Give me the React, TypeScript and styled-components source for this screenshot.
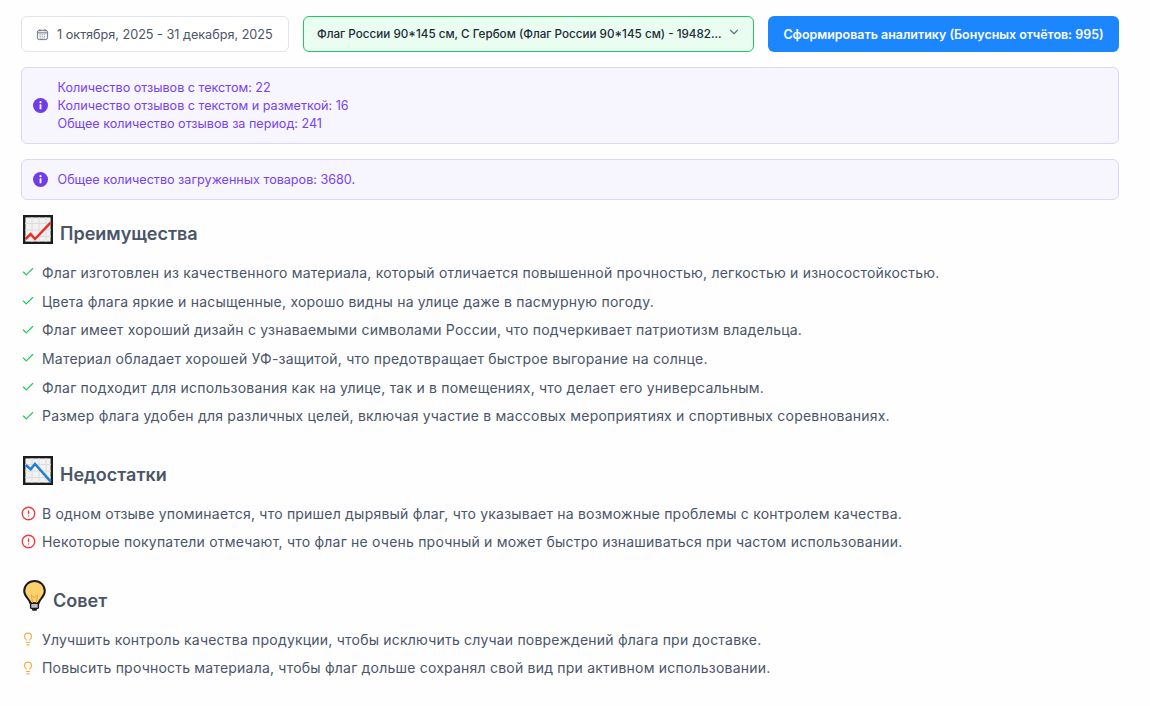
import React from "react";
import styled, { createGlobalStyle } from "styled-components";
import { ChevronDown, Check, CircleAlert, Lightbulb } from "lucide-react";

const GlobalStyle = createGlobalStyle`
	html, body {
		margin: 0;
		padding: 0;
		background: #fefefe;
		font-family: Inter, "Noto Sans", sans-serif;
	}
`;

const Page = styled.div`
	width: 1098px;
	padding: 16px 0 0 21px;
`;

const Toolbar = styled.div`
	display: flex;
	gap: 14px;
	height: 36px;
	margin-bottom: 15px;
`;

const DateBox = styled.div`
	box-sizing: border-box;
	width: 268px;
	display: flex;
	align-items: center;
	gap: 8px;
	padding-left: 14px;
	background: #fff;
	border: 1px solid #e0e3eb;
	border-radius: 6px;
	font-size: 12.65px;
	color: #4b5563;
	white-space: nowrap;
`;

const ProductSelect = styled.div`
	box-sizing: border-box;
	width: 451px;
	display: flex;
	justify-content: space-between;
	align-items: center;
	padding: 0 12px 0 13px;
	background: #e9fdf1;
	border: 1px solid #22c55e;
	border-radius: 6px;
	font-size: 11.67px;
	font-weight: 500;
	color: #1f2937;
	white-space: nowrap;
	svg {
		margin-top: -4px;
		color: #6b7280;
	}
`;

const SubmitButton = styled.button`
	width: 351px;
	padding: 0;
	border: none;
	border-radius: 6px;
	background: #1c86ff;
	color: #fff;
	font-family: inherit;
	font-size: 12.45px;
	font-weight: 600;
	white-space: nowrap;
`;

const Notice = styled.div`
	box-sizing: border-box;
	display: flex;
	align-items: center;
	gap: 9.5px;
	padding: 10.5px 11px;
	margin-bottom: 15px;
	background: #f7f5fe;
	border: 1px solid #e0d5f9;
	border-radius: 6px;
	color: #7544ee;
	font-size: 12.6px;
	line-height: 18px;
`;

const SectionTitle = styled.div`
	display: flex;
	align-items: flex-end;
	gap: 7px;
	height: 32px;
	margin-bottom: 11px;
	padding-left: 2px;
	color: #4a5568;
	font-size: 18px;
	font-weight: 600;
	line-height: 26px;
	svg {
		margin-bottom: 3px;
	}
`;

const Section = styled.section`
	margin-bottom: 25.6px;
`;

const List = styled.ul`
	list-style: none;
	margin: 0;
	padding: 0;
`;

const Item = styled.li`
	display: flex;
	align-items: center;
	gap: 7px;
	height: 28.7px;
	color: #4a5568;
	font-size: 14px;
	letter-spacing: 0.21px;
	white-space: nowrap;
`;

const Marker = styled.span`
	width: 14px;
	display: flex;
	justify-content: center;
	svg {
		flex-shrink: 0;
	}
`;

const CalendarIcon = () => (
	<svg width="13" height="13" viewBox="0 0 14 14" fill="none">
		<rect x="1.5" y="2.5" width="11" height="10" rx="2" fill="#eef0f3" stroke="#6b7280" strokeWidth="1" />
		<path d="M1.5 5.2h11M4.3 1.2v2.4M9.7 1.2v2.4" stroke="#6b7280" strokeWidth="1" />
		<path d="M4 7.3h6M4 9.2h6M4 11h6" stroke="#9ca3af" strokeWidth="0.9" strokeDasharray="1.2 1" />
	</svg>
);

const InfoIcon = () => (
	<svg width="15" height="15" viewBox="0 0 15 15" style={{ flexShrink: 0 }}>
		<circle cx="7.5" cy="7.5" r="7.5" fill="#6f3ce8" />
		<rect x="6.6" y="6.3" width="1.8" height="5" rx="0.4" fill="#fff" />
		<circle cx="7.5" cy="4.2" r="1.1" fill="#fff" />
	</svg>
);

const ChartIcon = ({ line, points }: { line: string; points: string }) => (
	<svg width="30" height="29" viewBox="0 0 30 29">
		<rect x="1.2" y="1.2" width="27.6" height="26.6" fill="#f1f1f1" stroke="#1c1c1c" strokeWidth="2.4" />
		<path d="M2 8.5h26M2 15h26M2 21.5h26M9 2v25M16 2v25M23 2v25" stroke="#dcdcdc" strokeWidth="1" />
		<polyline points={points} fill="none" stroke={line} strokeWidth="2.5" />
	</svg>
);

const BulbIcon = () => (
	<svg width="23" height="31" viewBox="0 0 23 31">
		<path
			d="M11.5 1C5.8 1 1.2 5.4 1.2 11c0 3.4 1.8 5.6 3.6 7.6 1.4 1.6 2.2 2.9 2.6 4.6h8.2c.4-1.7 1.2-3 2.6-4.6 1.8-2 3.6-4.2 3.6-7.6C21.8 5.4 17.2 1 11.5 1z"
			fill="#fdd26e"
			stroke="#1c1c1c"
			strokeWidth="2"
		/>
		<path d="M9.6 23 8.4 15l3.1 2.6L14.6 15l-1.2 8" fill="none" stroke="#e8a53a" strokeWidth="1" />
		<rect x="7.6" y="23.4" width="7.8" height="5" rx="1" fill="#b9bcc0" stroke="#1c1c1c" strokeWidth="1.4" />
		<rect x="9" y="28.4" width="5" height="2.4" rx="1" fill="#1c1c1c" />
	</svg>
);

const pros = [
	"Флаг изготовлен из качественного материала, который отличается повышенной прочностью, легкостью и износостойкостью.",
	"Цвета флага яркие и насыщенные, хорошо видны на улице даже в пасмурную погоду.",
	"Флаг имеет хороший дизайн с узнаваемыми символами России, что подчеркивает патриотизм владельца.",
	"Материал обладает хорошей УФ-защитой, что предотвращает быстрое выгорание на солнце.",
	"Флаг подходит для использования как на улице, так и в помещениях, что делает его универсальным.",
	"Размер флага удобен для различных целей, включая участие в массовых мероприятиях и спортивных соревнованиях.",
];

const cons = [
	"В одном отзыве упоминается, что пришел дырявый флаг, что указывает на возможные проблемы с контролем качества.",
	"Некоторые покупатели отмечают, что флаг не очень прочный и может быстро изнашиваться при частом использовании.",
];

const tips = [
	"Улучшить контроль качества продукции, чтобы исключить случаи повреждений флага при доставке.",
	"Повысить прочность материала, чтобы флаг дольше сохранял свой вид при активном использовании.",
];

function App() {
	return (
		<Page>
			<GlobalStyle />
			<Toolbar>
				<DateBox>
					<CalendarIcon />1 октября, 2025 - 31 декабря, 2025
				</DateBox>
				<ProductSelect>
					Флаг России 90*145 см, С Гербом (Флаг России 90*145 см) - 19482...
					<ChevronDown size={14} />
				</ProductSelect>
				<SubmitButton>Сформировать аналитику (Бонусных отчётов: 995)</SubmitButton>
			</Toolbar>
			<Notice>
				<InfoIcon />
				<div>
					Количество отзывов с текстом: 22
					<br />
					Количество отзывов с текстом и разметкой: 16
					<br />
					Общее количество отзывов за период: 241
				</div>
			</Notice>
			<Notice>
				<InfoIcon />
				<div>Общее количество загруженных товаров: 3680.</div>
			</Notice>

			<Section>
				<SectionTitle>
					<ChartIcon line="#e8302a" points="2.6,24 7.6,19 12,24 27.6,7.6" />
					Преимущества
				</SectionTitle>
				<List>
					{pros.map((text) => (
						<Item key={text}>
							<Marker>
								<Check size={14} color="#22c55e" strokeWidth={2} />
							</Marker>
							{text}
						</Item>
					))}
				</List>
			</Section>

			<Section>
				<SectionTitle>
					<ChartIcon line="#1f7fd6" points="2.7,9 7.7,13.3 12,8 27.7,25.7" />
					Недостатки
				</SectionTitle>
				<List>
					{cons.map((text) => (
						<Item key={text}>
							<Marker>
								<CircleAlert size={15} color="#ef3b3b" strokeWidth={2.2} />
							</Marker>
							{text}
						</Item>
					))}
				</List>
			</Section>

			<Section>
				<SectionTitle>
					<BulbIcon />
					Совет
				</SectionTitle>
				<List>
					{tips.map((text) => (
						<Item key={text}>
							<Marker>
								<Lightbulb size={14} color="#f5b04c" />
							</Marker>
							{text}
						</Item>
					))}
				</List>
			</Section>
		</Page>
	);
}

export default App;
